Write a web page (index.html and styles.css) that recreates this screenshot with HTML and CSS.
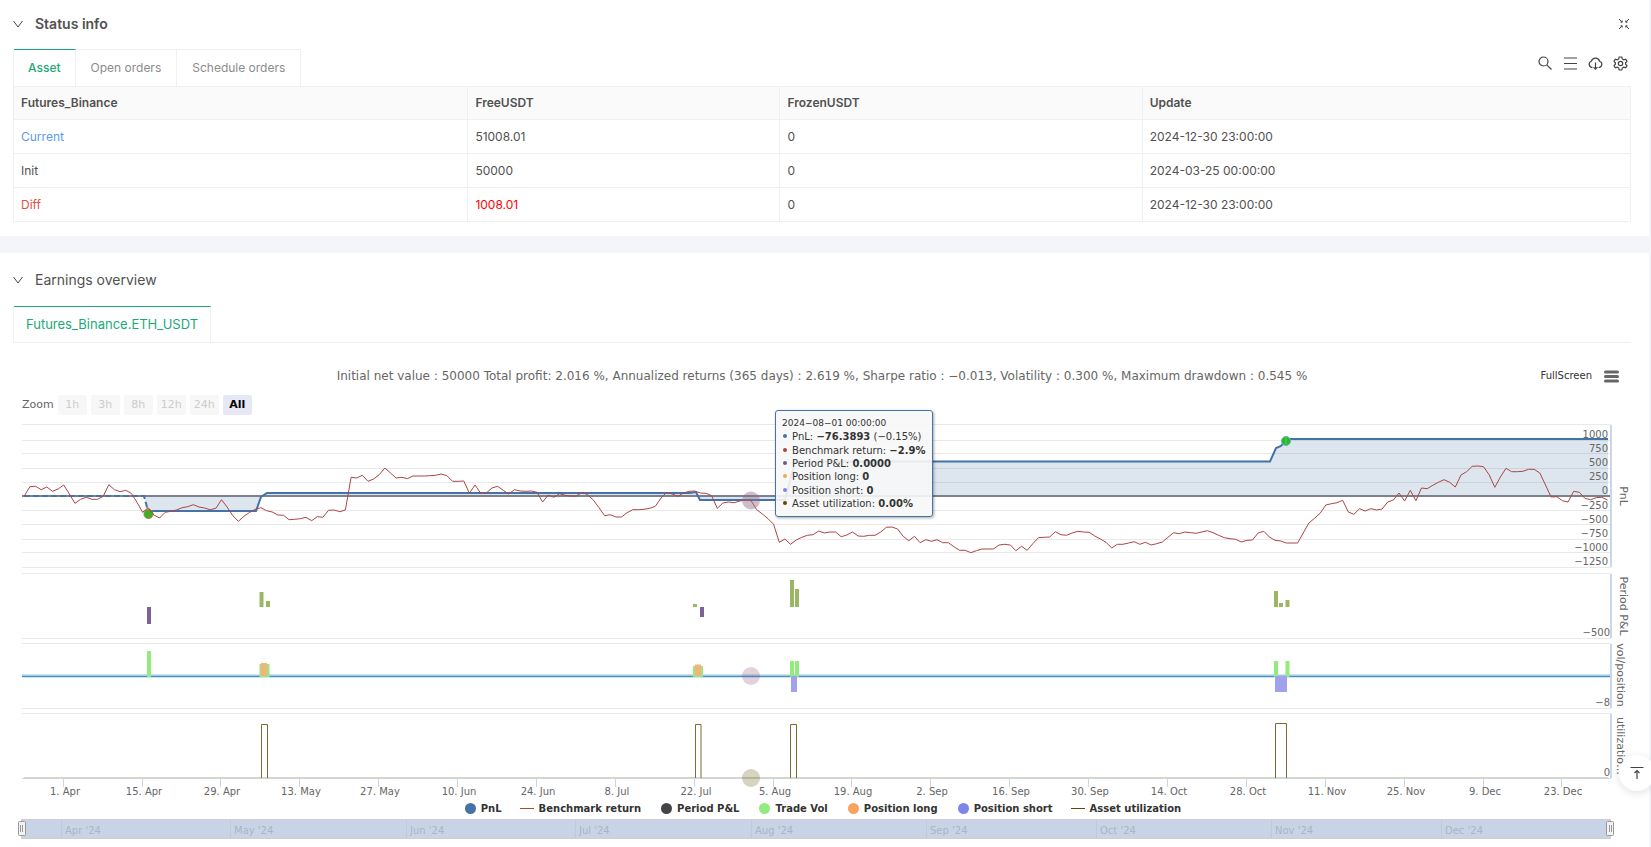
FILE: index.html
```html
<!doctype html>
<html lang="en">
    <head>
        <meta charset="UTF-8" />
        <meta name="viewport" content="width=device-width, initial-scale=1.0" />
        <title>Backtest result</title>
        <link rel="stylesheet" href="styles.css" />
    </head>
    <body>
        <section class="panel">
            <div class="panel-header">
                <button class="icon-btn chevron" aria-label="Collapse status info">
                    <svg width="10" height="10" viewBox="0 0 10 10"><path d="M.5 2 5 8 9.500 2" /></svg>
                </button>
                <h2 class="strong">Status info</h2>
                <button class="icon-btn shrink" aria-label="Shrink">
                    <svg width="12" height="12" viewBox="0 0 12 12">
                        <path d="M1 1l3 3M4.200 2.500v1.700H2.500M11 1 8 4M7.800 2.500v1.700h1.700M1 11l3-3M2.500 7.800h1.700v1.700M11 11 8 8M9.500 7.800H7.800v1.700" />
                    </svg>
                </button>
            </div>

            <div class="tabs-row">
                <div class="tabs">
                    <button class="tab active">Asset</button>
                    <button class="tab">Open orders</button>
                    <button class="tab">Schedule orders</button>
                </div>
                <div class="tools">
                    <button class="icon-btn" aria-label="Search">
                        <svg width="15" height="15" viewBox="0 0 15 15"><circle cx="5.500" cy="5.500" r="4.500" /><path d="m8.800 8.800 4.700 4.700" /></svg>
                    </button>
                    <button class="icon-btn" aria-label="List">
                        <svg width="15" height="15" viewBox="0 0 15 15"><path d="M1 2h13M1 7.500h13M1 13h13" /></svg>
                    </button>
                    <button class="icon-btn" aria-label="Download">
                        <svg width="15" height="15" viewBox="0 0 15 15">
                            <path d="M4.500 11.500H4A3.200 3.200 0 0 1 3.300 5.300a4.400 4.400 0 0 1 8.400 0A3.200 3.200 0 0 1 11 11.500h-.5M7.500 6.500V13M5.500 11.200l2 2 2-2" />
                        </svg>
                    </button>
                    <button class="icon-btn" aria-label="Settings">
                        <svg width="15" height="15" viewBox="0 0 15 15">
                            <path d="M6.200 1h2.600l.5 1.900 1.500.9 1.900-.6L14 5.500l-1.400 1.300v1.400L14 9.500l-1.300 2.300-1.900-.6-1.500.9L8.800 14H6.200l-.5-1.900-1.500-.9-1.900.6L1 9.500l1.400-1.300V6.800L1 5.500l1.300-2.300 1.900.6 1.500-.9z" />
                            <circle cx="7.500" cy="7.500" r="2.200" />
                        </svg>
                    </button>
                </div>
            </div>

            <table class="assets">
                <thead>
                    <tr>
                        <th class="col-name">Futures_Binance</th>
                        <th class="col-free">FreeUSDT</th>
                        <th class="col-frozen">FrozenUSDT</th>
                        <th>Update</th>
                    </tr>
                </thead>
                <tbody>
                    <tr>
                        <td class="current">Current</td>
                        <td>51008.01</td>
                        <td>0</td>
                        <td>2024-12-30 23:00:00</td>
                    </tr>
                    <tr>
                        <td>Init</td>
                        <td>50000</td>
                        <td>0</td>
                        <td>2024-03-25 00:00:00</td>
                    </tr>
                    <tr>
                        <td class="diff">Diff</td>
                        <td class="gain">1008.01</td>
                        <td>0</td>
                        <td>2024-12-30 23:00:00</td>
                    </tr>
                </tbody>
            </table>
        </section>

        <section class="panel earnings">
            <div class="panel-header tall">
                <button class="icon-btn chevron" aria-label="Collapse earnings overview">
                    <svg width="10" height="10" viewBox="0 0 10 10"><path d="M.5 2 5 8 9.500 2" /></svg>
                </button>
                <h2>Earnings overview</h2>
            </div>

            <div class="tabs-row underline">
                <div class="tabs">
                    <button class="tab active">Futures_Binance.ETH_USDT</button>
                </div>
            </div>

            <div class="chart">
                <div class="chart-head">
                    <p class="chart-title">Initial net value : 50000 Total profit: 2.016 %, Annualized returns (365 days) : 2.619 %, Sharpe ratio : −0.013, Volatility : 0.300 %, Maximum drawdown : 0.545 %</p>
                    <div class="chart-actions">
                        <button class="link-btn">FullScreen</button>
                        <button class="icon-btn menu" aria-label="Chart menu">
                            <svg width="15" height="13" viewBox="0 0 15 13"><path d="M1.500 2h12M1.500 6.500h12M1.500 11h12" /></svg>
                        </button>
                    </div>
                </div>

                <div class="range">
                    <span>Zoom</span>
                    <button disabled>1h</button>
                    <button disabled>3h</button>
                    <button disabled>8h</button>
                    <button disabled>12h</button>
                    <button disabled>24h</button>
                    <button class="selected">All</button>
                </div>

                <div class="plot">
                    <svg class="plot-svg" viewBox="13 420 1618 380">
                        <g id="grid"></g>

                        <!-- PnL area, zero line and PnL line -->
                        <path class="area" d="M144 497 148 512H256l5-14 6-4H696l4 7H785L795 462.500H1270L1276 449l5-2 6-7H1608V497z" />
                        <path class="zero" d="M22 497H1611" />
                        <path class="pnl dashed" d="M24 497H144L148 512" />
                        <path class="pnl" d="M148 512H256L261 498 267 494H690L696 493 700 501H785L795 462.500H1270L1276 449 1281 447 1287 440H1608" />

                        <!-- trade markers -->
                        <circle class="mark sell" cx="148.500" cy="515" r="4.500" />
                        <path class="mark-bar sell" d="M148.500 511v8" />
                        <circle class="mark buy" cx="1286" cy="442" r="4.500" />
                        <path class="mark-bar buy" d="M1286 438v8" />
                        <path class="benchmark" id="benchmark" />

                        <!-- period P&L -->
                        <path class="loss" d="M147 608h4v17h-4zM700 608h4v10h-4z" />
                        <path class="profit" d="M259.500 593h4v15h-4zM266 602h4v6h-4zM693 605h4v3h-4zM790 581h4v27h-4zM795 590h4v18h-4zM1274 592h4v16h-4zM1279 604h4v4h-4zM1285.500 601h4v7h-4z" />

                        <!-- volume and position -->
                        <path class="vol-line" d="M22 677H1610" />
                        <path class="vol-core" d="M22 677.500H1610" />
                        <path class="vol" d="M147 652h4v26h-4zM259.500 665h10v13h-10zM693 667h10v11h-10zM790 662h4v16h-4zM795 662h4v16h-4zM1274 662h4v16h-4zM1285.500 662h4v16h-4z" />
                        <path class="long" d="M261 664h6v13h-6zM695 665.500h6v11.500h-6z" />
                        <path class="short" d="M791 677h6v16h-6zM1275 677h12v16h-12z" />

                        <!-- asset utilization -->
                        <path class="util-base" d="M24 778.500H1608" />
                        <path class="util" d="M261.500 779V725.500H267.500V779M695.500 779V725.500H701V779M790.500 779V725.500H796.500V779M1275.500 779V724.500H1286.500V779" />

                        <!-- hover halos -->
                        <circle class="halo-pnl" cx="751" cy="501.500" r="9" />
                        <circle class="halo-vol" cx="751" cy="677" r="9" />
                        <circle class="halo-util" cx="751" cy="779" r="9" />

                        <path class="yaxis" d="M1611 426V568M1611 575V639M1611 645V709M1611 715V779" />
                        <g id="labels"></g>
                        <g class="ytitle">
                            <text transform="translate(1620 497) rotate(90)">PnL</text>
                            <text transform="translate(1620 607) rotate(90)">Period P&amp;L</text>
                            <text transform="translate(1617 676) rotate(90)">vol/position</text>
                            <text transform="translate(1617 747) rotate(90)">utilizatio…</text>
                        </g>
                    </svg>

                    <div class="tooltip">
                        <small>2024−08−01 00:00:00</small>
                        <div><i class="c-pnl"></i>PnL: <b>−76.3893</b> (−0.15%)</div>
                        <div><i class="c-bench"></i>Benchmark return: <b>−2.9%</b></div>
                        <div><i class="c-period"></i>Period P&amp;L: <b>0.0000</b></div>
                        <div><i class="c-long"></i>Position long: <b>0</b></div>
                        <div><i class="c-short"></i>Position short: <b>0</b></div>
                        <div><i class="c-util"></i>Asset utilization: <b>0.00%</b></div>
                    </div>
                </div>

                <div class="legend">
                    <button><i class="dot c-pnl"></i>PnL</button>
                    <button><i class="line c-bench"></i>Benchmark return</button>
                    <button><i class="dot c-dark"></i>Period P&amp;L</button>
                    <button><i class="dot c-vol"></i>Trade Vol</button>
                    <button><i class="dot c-long"></i>Position long</button>
                    <button><i class="dot c-short"></i>Position short</button>
                    <button><i class="line c-util"></i>Asset utilization</button>
                </div>

                <svg class="navigator" viewBox="13 819 1618 22">
                    <rect class="nav-mask" x="21" y="821" width="1590" height="18" />
                    <path class="nav-edge" d="M21 820.500H1611M21 839.500H1611" />
                    <g id="months"></g>
                    <g class="handle">
                        <rect x="18.500" y="822.500" width="7" height="14" rx="1" />
                        <path d="M20.500 826v7M22.500 826v7" />
                        <rect x="1606.500" y="822.500" width="7" height="14" rx="1" />
                        <path d="M1609.500 826v7M1611.500 826v7" />
                    </g>
                </svg>
            </div>
        </section>

        <button class="back-top" aria-label="Back to top">
            <svg width="14" height="14" viewBox="0 0 14 14"><path d="M.5 1.500h13M7 13V4.500M4.500 7 7 4.500 9.500 7" /></svg>
        </button>

        <script src="chart.js"></script>
    </body>
</html>
```

FILE: styles.css
```css
* {
    box-sizing: border-box;
}

body {
    display: flex;
    flex-direction: column;
    gap: 17px;
    min-height: 100vh;
    margin: 0;
    background: #f4f5f8;
    color: #515151;
    font: 12px/20px Inter, "Liberation Sans", sans-serif;
}

button {
    margin: 0;
    padding: 0;
    border: 0;
    background: none;
    color: inherit;
    font: inherit;
    cursor: pointer;
}

.panel {
    margin-right: 2px;
    padding: 0 18px 14px 13px;
    background: #fff;
}

.earnings {
    flex: 1;
    padding-bottom: 0;
}

.panel-header {
    display: flex;
    align-items: center;
    height: 49px;
    padding-bottom: 2px;
}

.panel-header.tall {
    height: 53px;
    padding-bottom: 0;
}

.panel-header h2 {
    margin: 0 auto 0 12px;
    font-size: 14px;
    font-weight: 400;
}

.panel-header .strong {
    font-weight: 600;
}

.icon-btn {
    display: flex;
}

.icon-btn svg {
    fill: none;
    stroke: #444;
    stroke-width: 1.2;
}

.chevron svg {
    stroke-width: 1;
}

.shrink {
    margin-right: 1px;
}

.shrink svg {
    stroke-width: 1;
}

.tabs-row {
    display: flex;
    justify-content: space-between;
    align-items: center;
    height: 37px;
}

.underline {
    border-bottom: 1px solid #f0f0f0;
}

.tabs {
    display: flex;
    height: 100%;
    border-left: 1px solid #f0f0f0;
}

.tab {
    padding: 0 15px 1px;
    border: solid #f0f0f0;
    border-width: 1px 1px 0 0;
    color: #8c8c8c;
}

.tab.active {
    padding: 0 14px 1px;
    border-top-color: #1ca97a;
    color: #1ca97a;
    font-weight: 500;
}

.underline .tab.active {
    padding: 0 12px 1px;
    font-size: 13px;
    font-weight: 400;
}

.tools {
    display: flex;
    gap: 10px;
    margin: -8px 3px 0 0;
}

.assets {
    width: 100%;
    border-collapse: collapse;
    table-layout: fixed;
}

.assets th,
.assets td {
    height: 34px;
    padding: 0 7px;
    border: 1px solid #f0f0f0;
    text-align: left;
}

.assets th {
    height: 33px;
    background: #fafafa;
    font-weight: 600;
}

.col-name {
    width: 28.1%;
}

.col-free {
    width: 19.3%;
}

.col-frozen {
    width: 22.4%;
}

.current {
    color: #5a9cea;
}

.diff {
    color: #dd5145;
}

.gain {
    color: #f00;
}

/* chart */
.chart {
    font: 11px/14px "DejaVu Sans", sans-serif;
}

.chart-head {
    display: grid;
    grid-template-columns: 1fr auto 1fr;
    align-items: center;
    height: 34px;
    margin-top: 16px;
}

.chart-title {
    grid-column: 2;
    margin: 0;
    color: #666;
    font-size: 12px;
}

.chart-actions {
    display: flex;
    justify-content: flex-end;
    align-items: center;
    gap: 12px;
    padding-right: 12px;
}

.link-btn {
    color: #333;
    font-size: 10px;
}

.menu svg {
    stroke: #666;
    stroke-width: 3;
    stroke-linecap: round;
}

.range {
    display: flex;
    align-items: center;
    gap: 4px;
    margin: 2px 0 4px 9px;
    color: #666;
}

.range button {
    width: 29px;
    height: 20px;
    border-radius: 2px;
    background: #f7f7f7;
}

.range button:disabled {
    color: #ccc;
}

.range .selected {
    background: #e6e9f5;
    color: #000;
    font-weight: bold;
}

.plot {
    position: relative;
}

.plot-svg,
.navigator {
    display: block;
    width: 100%;
    fill: none;
}

.gridline {
    stroke: #e9e9e9;
}

.area {
    fill: #4572a7;
    fill-opacity: 0.18;
}

.zero {
    stroke: #7b828e;
    stroke-width: 2;
}

.pnl {
    stroke: #4572a7;
    stroke-width: 2;
}

.dashed {
    stroke-dasharray: 6 3;
}

.benchmark {
    stroke: #aa4643;
}

.mark {
    fill: #1fbf1f;
    stroke-width: 1;
}

.mark.sell,
.mark-bar.sell {
    stroke: #c0713a;
}

.mark.buy,
.mark-bar.buy {
    stroke: #6cb5a5;
}

.loss {
    fill: #7b6399;
}

.profit {
    fill: #9bb765;
}

.vol-line {
    stroke: #9ccbe4;
    stroke-width: 3;
}

.vol-core {
    stroke: #4490c4;
}

.vol {
    fill: #90ed7d;
}

.long {
    fill: #f7b27a;
}

.short {
    fill: #a0a2ec;
}

.util-base {
    stroke: #d8d4c0;
}

.util {
    stroke: #7b6d33;
}

.halo-pnl {
    fill: #8f6d87;
    fill-opacity: 0.45;
}

.halo-vol {
    fill: #8d4b7d;
    fill-opacity: 0.25;
}

.halo-util {
    fill: #5c5000;
    fill-opacity: 0.25;
}

.yaxis {
    stroke: #ccd6eb;
    stroke-width: 2;
}

.tick {
    stroke: #ccd6eb;
}

.ylabel,
.xlabel {
    fill: #666;
    font-size: 10px;
}

.ylabel {
    text-anchor: end;
}

.xlabel,
.ytitle {
    text-anchor: middle;
}

.ytitle {
    fill: #666;
    font-size: 11px;
}

.tooltip {
    position: absolute;
    top: -9px;
    left: 47.1%;
    display: flex;
    flex-direction: column;
    justify-content: space-between;
    width: 158px;
    min-height: 107px;
    padding: 6px;
    border: 1px solid #4572a7;
    border-radius: 3px;
    background: rgba(247, 247, 247, 0.9);
    box-shadow: 1px 1px 3px rgba(0, 0, 0, 0.35);
    color: #333;
    font-size: 10px;
    line-height: 13px;
    white-space: nowrap;
}

.tooltip small {
    font-size: 9px;
}

.tooltip i {
    display: inline-block;
    width: 4px;
    height: 4px;
    margin: 0 5px 2px 1px;
    border-radius: 50%;
}

.legend {
    display: flex;
    justify-content: center;
    gap: 18px;
    height: 19px;
    color: #333;
    font-weight: bold;
    font-size: 10px;
}

.legend button {
    display: flex;
    align-items: center;
    gap: 5px;
}

.dot {
    width: 11px;
    height: 11px;
    margin-left: 2px;
    border-radius: 50%;
}

.line {
    width: 14px;
    height: 1px;
}

.c-pnl {
    background: #4572a7;
}

.c-bench {
    background: #aa4643;
}

.c-period {
    background: #71588f;
}

.c-dark {
    background: #434348;
}

.c-vol {
    background: #90ed7d;
}

.c-long {
    background: #f7a35c;
}

.c-short {
    background: #8085e9;
}

.c-util {
    background: #5c4b00;
}

.nav-mask {
    fill: #c8d4e5;
}

.nav-edge {
    stroke: #cfcfd3;
}

.month-line {
    stroke: #bdcadc;
}

.month {
    fill: #a9b5c5;
    font-size: 10px;
}

.handle {
    fill: #f2f2f2;
    stroke: #999;
}

.back-top {
    position: fixed;
    right: -4px;
    bottom: 56px;
    display: flex;
    align-items: center;
    justify-content: center;
    width: 36px;
    height: 36px;
    border-radius: 50%;
    background: #fff;
    box-shadow: 0 2px 8px rgba(0, 0, 0, 0.12);
}

.back-top svg {
    fill: none;
    stroke: #444;
    stroke-width: 1.2;
}
```

FILE: chart.js
```js
const NS = "http://www.w3.org/2000/svg";
const LEFT = 22;
const RIGHT = 1611;
const ZERO = 497;
const DAY = 5.634;

// one benchmark sample per day, in thirds of a chart unit
const benchmark = [
    0, 28, 29, 19, 27, 14, 21, 33, 6, -22, -10, -4, -10, -10, -1, 34, 19, 13, 17, 8,
    -19, -49, -35, -57, -66, -49, -46, -42, -35, -32, -26, -33, -36, -41, -37, -11, -33, -59, -76, -61,
    -49, -40, -35, -44, -48, -57, -58, -71, -70, -68, -64, -74, -62, -64, -43, -42, -47, -42, 56, 54,
    62, 44, 51, 64, 84, 69, 54, 56, 52, 60, 60, 60, 61, 62, 66, 61, 44, 44, 45, 8,
    33, 8, 9, 24, 29, 17, 6, 19, 15, 14, 15, 11, -18, 3, -4, 7, 2, 0, 0, 11,
    4, -12, -35, -59, -56, -63, -63, -50, -41, -41, -40, -37, -31, -7, 11, 6, -1, 9, 14, 15,
    9, 8, 1, -37, -21, -18, -20, -15, -12, -14, -41, -54, -68, -85, -139, -129, -145, -132, -124, -118,
    -116, -105, -111, -108, -108, -122, -117, -108, -120, -121, -118, -118, -108, -94, -93, -99, -121, -134, -121, -140,
    -131, -136, -131, -140, -140, -152, -163, -163, -170, -164, -159, -159, -159, -147, -145, -147, -164, -151, -163, -143,
    -125, -124, -123, -107, -116, -118, -111, -106, -108, -109, -120, -129, -139, -156, -145, -145, -141, -137, -145, -139,
    -147, -143, -138, -124, -110, -113, -108, -110, -112, -108, -104, -110, -118, -125, -128, -130, -138, -133, -132, -111,
    -106, -123, -133, -135, -141, -141, -141, -111, -81, -67, -52, -27, -23, -20, -13, -48, -55, -38, -45, -38,
    -42, -39, -18, -12, 9, -15, 17, -14, 24, 22, 32, 41, 49, 41, 27, 63, 73, 89, 90, 88,
    64, 26, 57, 83, 73, 73, 74, 80, 80, 69, 33, -3, -2, -14, -18, 14, 11, -7, -11, -5,
    -4, -12,
];

const days = [
    "1. Apr", "15. Apr", "29. Apr", "13. May", "27. May", "10. Jun", "24. Jun", "8. Jul", "22. Jul", "5. Aug",
    "19. Aug", "2. Sep", "16. Sep", "30. Sep", "14. Oct", "28. Oct", "11. Nov", "25. Nov", "9. Dec", "23. Dec",
];

const months = [
    [7, "Apr '24"], [37, "May '24"], [68, "Jun '24"], [98, "Jul '24"], [129, "Aug '24"],
    [160, "Sep '24"], [190, "Oct '24"], [221, "Nov '24"], [251, "Dec '24"],
];

function add(parent, tag, attrs, text) {
    const el = document.createElementNS(NS, tag);
    for (const key in attrs) el.setAttribute(key, attrs[key]);
    if (text) el.textContent = text;
    parent.appendChild(el);
}

function dayX(day) {
    return 24.3 + day * DAY;
}

const grid = document.getElementById("grid");
const labels = document.getElementById("labels");

// PnL grid lines, then the borders of the panes below
const rows = [425, 441, 454, 469, 483, 511, 525, 540, 553, 568, 574, 639, 644, 709, 714];
rows.forEach((y) => {
    add(grid, "path", { class: "gridline", d: `M${LEFT} ${y + 0.5}H${RIGHT}` });
});

const pnlTicks = [1000, 750, 500, 250, 0, -250, -500, -750, -1000, -1250];
pnlTicks.forEach((value, i) => {
    const text = String(value).replace("-", "−");
    add(labels, "text", { class: "ylabel", x: 1608, y: Math.round(439 + i * 14.1) }, text);
});
add(labels, "text", { class: "ylabel", x: 1610, y: 637 }, "−500");
add(labels, "text", { class: "ylabel", x: 1610, y: 707 }, "−8");
add(labels, "text", { class: "ylabel", x: 1610, y: 777 }, "0");

add(grid, "path", { class: "tick", d: `M${LEFT} 779.5H${RIGHT}` });
days.forEach((name, i) => {
    const x = Math.round(dayX(7 + i * 14));
    add(grid, "path", { class: "tick", d: `M${x - 0.5} 780V788` });
    add(labels, "text", { class: "xlabel", x: x + 1, y: 796 }, name);
});

const line = benchmark.map((v, i) => `${dayX(i).toFixed(1)} ${(ZERO - v / 3).toFixed(1)}`);
document.getElementById("benchmark").setAttribute("d", "M" + line.join("L"));

const nav = document.getElementById("months");
months.forEach(([day, name]) => {
    const x = Math.round(21 + day * 5.657);
    add(nav, "path", { class: "month-line", d: `M${x + 0.5} 821V839` });
    add(nav, "text", { class: "month", x: x + 4, y: 835 }, name);
});
```
